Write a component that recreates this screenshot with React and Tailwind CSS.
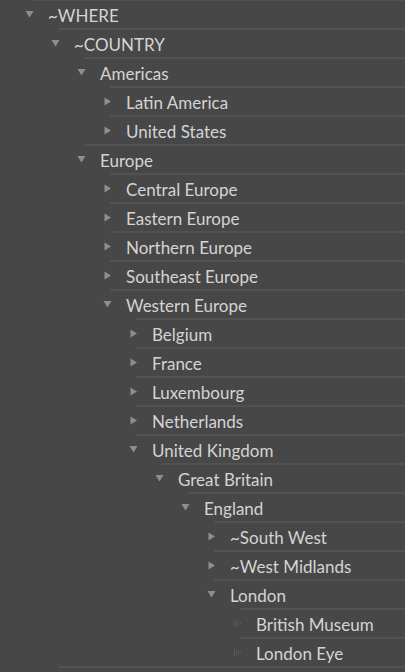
import React from 'react'

// keyword tree: [level, label, state] where state is 'open' | 'closed' | 'leaf'
const rows = [
  [0, '~WHERE', 'open'],
  [1, '~COUNTRY', 'open'],
  [2, 'Americas', 'open'],
  [3, 'Latin America', 'closed'],
  [3, 'United States', 'closed'],
  [2, 'Europe', 'open'],
  [3, 'Central Europe', 'closed'],
  [3, 'Eastern Europe', 'closed'],
  [3, 'Northern Europe', 'closed'],
  [3, 'Southeast Europe', 'closed'],
  [3, 'Western Europe', 'open'],
  [4, 'Belgium', 'closed'],
  [4, 'France', 'closed'],
  [4, 'Luxembourg', 'closed'],
  [4, 'Netherlands', 'closed'],
  [4, 'United Kingdom', 'open'],
  [5, 'Great Britain', 'open'],
  [6, 'England', 'open'],
  [7, '~South West', 'closed'],
  [7, '~West Midlands', 'closed'],
  [7, 'London', 'open'],
  [8, 'British Museum', 'leaf'],
  [8, 'London Eye', 'leaf'],
  [1, '', 'closed'],
]

function Arrow({ state }) {
  if (state === 'open') {
    return (
      <svg width="9" height="8" viewBox="0 0 9 8" className="block">
        <polygon points="0.5,1 8.5,1 4.5,7.5" fill="#8e8e8e" />
      </svg>
    )
  }
  if (state === 'closed') {
    return (
      <svg width="9" height="9" viewBox="0 0 9 9" className="block">
        <polygon points="1.5,0.5 8,4.5 1.5,8.5" fill="#8e8e8e" />
      </svg>
    )
  }
  // faint dotted marker for keywords without children
  const dots = [[1, 1], [1, 3], [1, 5], [1, 7], [3, 2], [3, 4], [3, 6], [5, 3], [5, 5], [7, 4]]
  return (
    <svg width="9" height="9" viewBox="0 0 9 9" className="block">
      {dots.map(([x, y], i) => (
        <rect key={i} x={x} y={y} width="1" height="1" fill="#636363" />
      ))}
    </svg>
  )
}

function Row({ level, label, state }) {
  return (
    <div className="flex h-[29px]">
      <div style={{ width: 32 + level * 26 }} className="shrink-0" />
      <div className="flex-1 border-t-2 border-[#525252] flex items-center relative">
        <div className="absolute left-[-7px] top-[9px]">
          <Arrow state={state} />
        </div>
        <span className="pl-4 pt-px text-[17px] leading-none text-[#d4d4d4] whitespace-nowrap">{label}</span>
      </div>
    </div>
  )
}

export default function App() {
  return (
    <div
      className="w-[405px] h-[672px] overflow-hidden bg-[#474747]"
      style={{ fontFamily: 'Lato, "Open Sans", sans-serif' }}
    >
      <div className="-mt-px">
        {rows.map(([level, label, state], i) => (
          <Row key={i} level={level} label={label} state={state} />
        ))}
      </div>
    </div>
  )
}
